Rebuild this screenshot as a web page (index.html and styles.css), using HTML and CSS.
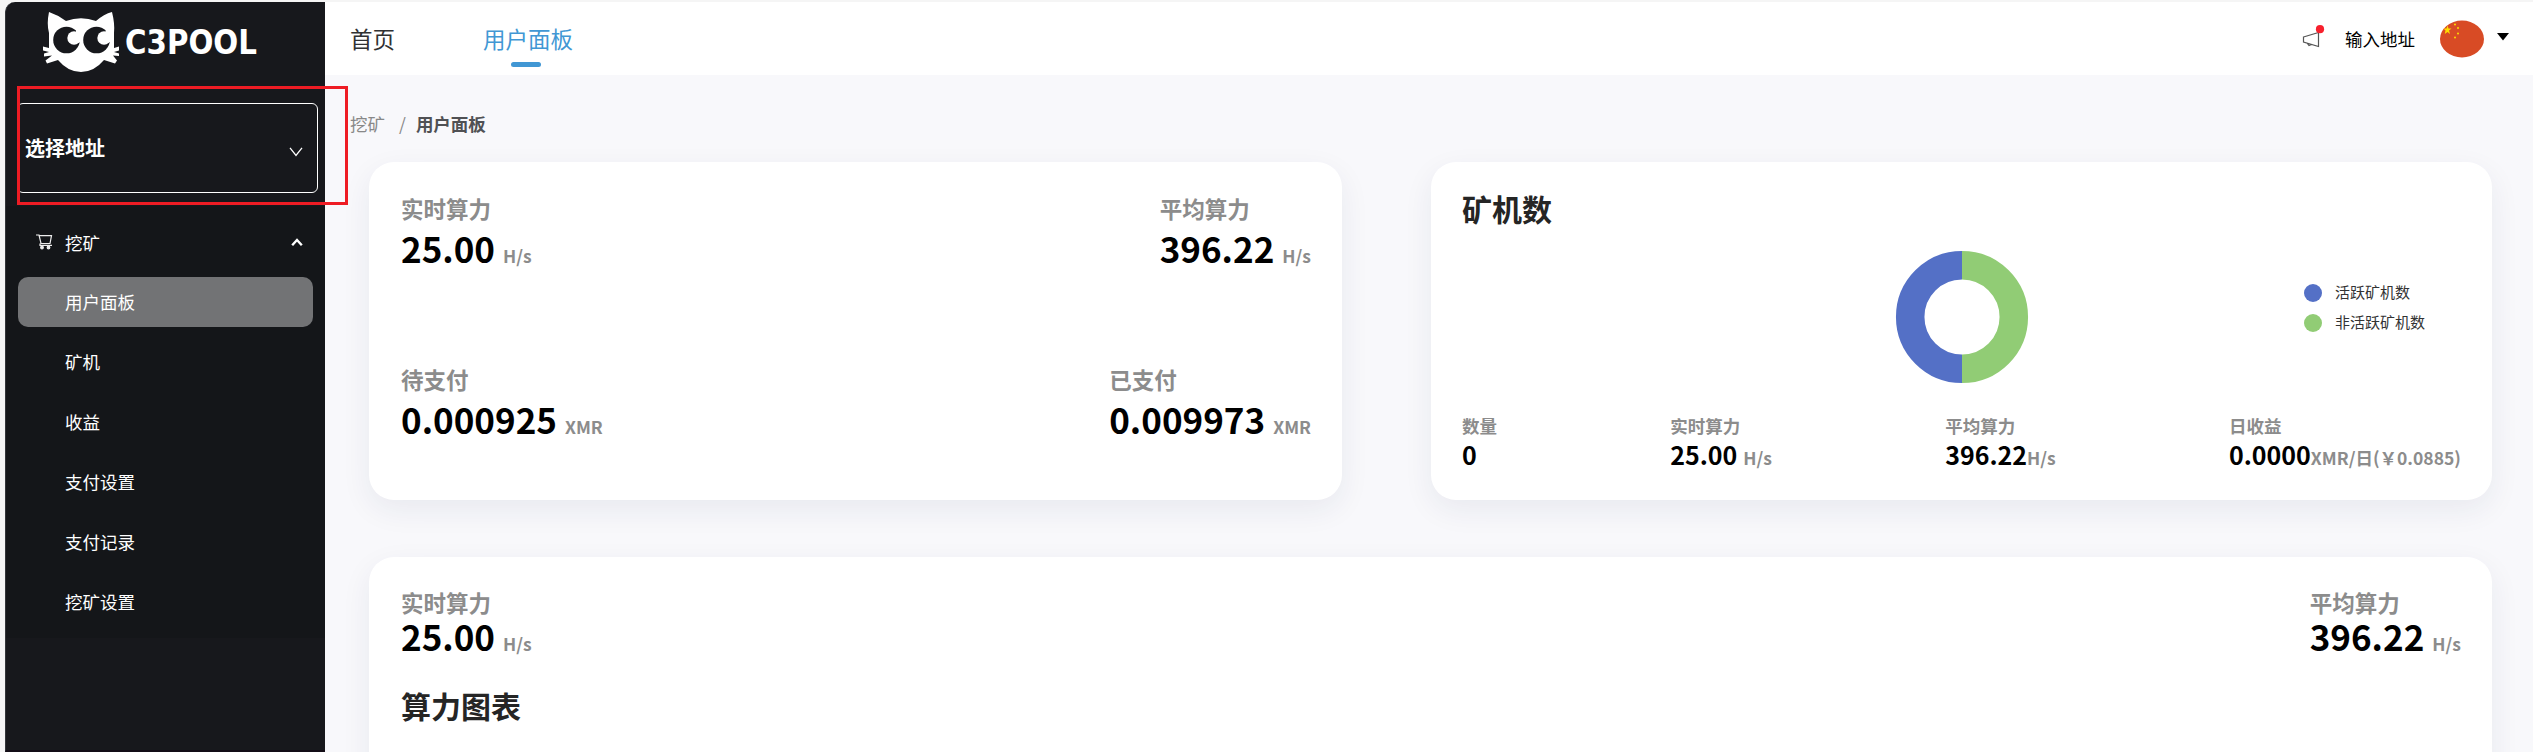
FILE: index.html
```html
<!DOCTYPE html>
<html lang="zh-CN">
<head>
<meta charset="utf-8">
<title>C3Pool</title>
<link rel="stylesheet" href="styles.css">
</head>
<body>
<div class="app">
  <aside class="sidebar">
    <div class="logo">
      <svg width="216" height="70" viewBox="0 0 216 70">
        <path fill="#fff" d="M6 10 Q15 13 23 19 Q38 13.500 53 19 Q61 12 69 10 Q72 22 71 31 V46 L76 44.500 V48.500 L71 50 L76 51.500 V54 L70 53.500 L74 58.500 L72 61.500 L61 58 Q51 70 38 70 Q25 70 15 58 L4 61.500 L2.500 58.500 L9 53.500 L1 54.500 V51.500 L6 50 L0 48.500 V44.500 L6 46 V31 Q3.500 22 6 10 Z"/>
        <g fill="#17181c"><circle cx="23.500" cy="38" r="13.300"/><circle cx="53.500" cy="38" r="13.300"/></g>
        <g fill="#fff"><circle cx="31" cy="36" r="6.700"/><circle cx="61" cy="36" r="6.700"/><path d="M33 25.500 40 31 38 40 31 42 33 33Z M63 26 67 31V40L61 42Z"/></g>
        <text class="wordmark" x="82" y="52" textLength="132" lengthAdjust="spacingAndGlyphs">C3POOL</text>
      </svg>
    </div>
    <div class="select">
      <span>选择地址</span>
      <svg width="14" height="10" viewBox="0 0 14 10"><path d="M1 .8 7 8.500 13 .8" fill="none" stroke="#fff" stroke-width="1.300"/></svg>
    </div>
    <nav class="menu">
      <div class="menu-title">
        <svg width="17" height="16" viewBox="0 0 17 16" fill="none" stroke="#eee" stroke-width="1.200"><path d="M0 1H3L5 9.500H14L15.500 1.700H3.500M4 9.500V11.300H16"/><circle cx="6" cy="13.500" r="1.300" fill="#eee"/><circle cx="12.500" cy="13.500" r="1.300" fill="#eee"/></svg>
        <span>挖矿</span>
        <svg class="chev" width="12" height="9" viewBox="0 0 12 9"><path d="M1.200 7.300 6 2 10.800 7.300" fill="none" stroke="#fff" stroke-width="2.400"/></svg>
      </div>
      <a class="item active">用户面板</a>
      <a class="item">矿机</a>
      <a class="item">收益</a>
      <a class="item">支付设置</a>
      <a class="item">支付记录</a>
      <a class="item">挖矿设置</a>
    </nav>
  </aside>
  <div class="main">
    <header class="header">
      <a class="tab">首页</a>
      <a class="tab current">用户面板</a>
      <div class="tools">
        <svg class="horn" width="23" height="24" viewBox="0 0 23 24"><path d="M1.500 12 16.500 7.500V21.500L1.500 17ZM5 18 7 20.500 9.500 19.500" fill="none" stroke="#555" stroke-width="1.200"/><circle cx="18" cy="4.200" r="4.100" fill="#f7202d"/></svg>
        <span class="addr">输入地址</span>
        <svg class="flag" width="44" height="38" viewBox="0 0 44 38"><ellipse cx="22" cy="19" rx="22" ry="18.500" fill="#d84b25"/><path fill="#fd0" d="M7.500 5.500 8.500 8.500H11.500L9 10.500 10 14 7.500 12 4.800 14 5.500 10.500 3.500 8.500H6.500Z"/><g fill="#fd0"><circle cx="15" cy="4.500" r="1"/><circle cx="18" cy="8" r="1"/><circle cx="18" cy="13.500" r="1"/><circle cx="15" cy="17.500" r="1"/></g></svg>
        <svg class="caret" width="12" height="8" viewBox="0 0 12 8"><path d="M0 0H12L6 7.500Z"/></svg>
      </div>
    </header>
    <div class="crumb"><span>挖矿</span><span class="sep">/</span><b>用户面板</b></div>
    <div class="cards">
      <section class="card rates">
        <div class="row">
          <div class="stat"><div class="label">实时算力</div><div class="value">25.00<small>H/s</small></div></div>
          <div class="stat"><div class="label">平均算力</div><div class="value">396.22<small>H/s</small></div></div>
        </div>
        <div class="row">
          <div class="stat"><div class="label">待支付</div><div class="value">0.000925<small>XMR</small></div></div>
          <div class="stat"><div class="label">已支付</div><div class="value">0.009973<small>XMR</small></div></div>
        </div>
      </section>
      <section class="card miners">
        <h2>矿机数</h2>
        <div class="chart">
          <svg class="donut" width="134" height="134" viewBox="0 0 134 134" fill="none" stroke-width="28.500"><path d="M67 15.200A51.800 51.800 0 0 0 67 118.800" stroke="#5470c6"/><path d="M67 15.200A51.800 51.800 0 0 1 67 118.800" stroke="#91cc75"/></svg>
          <ul class="legend"><li><i class="blue"></i><span>活跃矿机数</span></li><li><i class="green"></i><span>非活跃矿机数</span></li></ul>
        </div>
        <div class="row mini">
          <div><div class="label">数量</div><div class="value">0</div></div>
          <div class="spaced"><div class="label">实时算力</div><div class="value">25.00<small>H/s</small></div></div>
          <div><div class="label">平均算力</div><div class="value">396.22<small>H/s</small></div></div>
          <div><div class="label">日收益</div><div class="value">0.0000<small>XMR/日(￥0.0885)</small></div></div>
        </div>
      </section>
      <section class="card history">
        <div class="row">
          <div class="stat"><div class="label">实时算力</div><div class="value">25.00<small>H/s</small></div></div>
          <div class="stat"><div class="label">平均算力</div><div class="value">396.22<small>H/s</small></div></div>
        </div>
        <h2>算力图表</h2>
      </section>
    </div>
  </div>
  <div class="highlight"></div>
</div>
</body>
</html>
```
FILE: styles.css
```css
* { box-sizing: border-box; }
body { margin: 0; font-family: "Noto Sans CJK SC", sans-serif; font-size: 17.5px; color: #000; background: #f6f6f6; overflow: hidden; }
.app { position: relative; display: flex; height: 752px; padding: 2px 0 0 5px; background: #f5f5f5; overflow: hidden; }
.sidebar { width: 320px; flex: none; height: 750px; background: #17181c; color: #fff; border-top-left-radius: 10px; border-bottom: 2px solid #130d16; border-left: 1px solid #333539; }
.logo { height: 101px; padding-left: 37px; }
.logo svg { display: block; }
.wordmark { font-family: "DejaVu Sans", sans-serif; font-weight: 700; font-size: 34px; fill: #fff; }
.select { display: flex; align-items: center; justify-content: space-between; width: 301px; height: 90px; margin-left: 11px; padding: 0 14px 0 7px; border: 1px solid #fff; border-radius: 6px; font-size: 20px; font-weight: 700; line-height: 30px; }
.select svg { margin-top: 8px; }
.menu { margin-top: 13px; height: 432px; background: #141619; padding: 11px 12px 0; font-weight: 400; }
.menu-title { display: flex; align-items: center; height: 50px; padding: 0 10px 0 18px; margin-bottom: 10px; }
.menu-title span { margin-left: 12px; }
.chev { margin-left: auto; }
.item { display: block; width: 295px; height: 50px; line-height: 50px; padding-left: 47px; margin-bottom: 10px; border-radius: 10px; }
.active { background: #727375; }
.main { flex: 1; background: #f8f8fb; min-width: 0; }
.header { display: flex; height: 73px; background: #fff; padding-left: 25px; }
.tab { font-size: 22.5px; line-height: 73px; color: #303133; margin-right: 88px; }
.current { color: #4197d4; position: relative; }
.current::after { content: ""; position: absolute; left: 28px; top: 60px; width: 30px; height: 5px; border-radius: 3px; background: #4197d4; }
.tools { display: flex; margin-left: auto; padding-right: 24px; }
.horn { margin-top: 23px; }
.addr { margin-left: 20px; line-height: 73px; }
.flag { margin: 18px 0 0 25px; }
.caret { margin: 31px 0 0 13px; }
.crumb { display: flex; height: 87px; padding: 36px 0 0 25px; line-height: 26px; color: #888; }
.sep { margin: 0 10px 0 14px; }
.crumb b { color: #505154; font-weight: 700; }
.cards { display: grid; grid-template-columns: 973px 1061px; column-gap: 89px; row-gap: 57px; padding-left: 44px; }
.card { background: #fff; border-radius: 25px; padding: 29px 31px 0 32px; height: 338px; box-shadow: 0 10px 30px rgba(30, 40, 90, .07); }
.row { display: flex; justify-content: space-between; }
.label { font-size: 22.5px; font-weight: 700; line-height: 34px; color: #8c8c8c; }
.value { font-size: 35px; font-weight: 700; line-height: 46px; white-space: nowrap; }
.value small { font-size: 17.5px; font-weight: 700; color: #8c8c8c; margin-left: 8px; }
.rates .row { height: 171px; }
h2 { margin: 0; font-size: 30px; font-weight: 700; line-height: 44px; color: #252525; }
.miners { padding-top: 24px; padding-left: 31px; }
.chart { display: flex; height: 183px; padding: 20px 0 0 433px; }
.legend { list-style: none; margin: 28px 0 0 275px; padding: 0; font-size: 15px; color: #333; }
.legend li { display: flex; align-items: center; height: 30px; }
.legend span { margin-top: -4px; }
.legend i { width: 18px; height: 18px; border-radius: 50%; margin-right: 13px; }
.blue { background: #5470c6; }
.green { background: #91cc75; }
.mini .label { font-size: 17.5px; line-height: 26px; }
.mini .value { font-size: 25px; line-height: 30px; }
.mini .value small { margin-left: 0; }
.mini .spaced small { margin-left: 6px; }
.history { grid-column: 1 / 3; height: 400px; padding-top: 28px; }
.history .value { line-height: 34px; }
.history h2 { margin-top: 22px; }
.highlight { position: absolute; left: 17px; top: 86px; width: 331px; height: 119px; border: 3px solid #ee1c24; }
```
